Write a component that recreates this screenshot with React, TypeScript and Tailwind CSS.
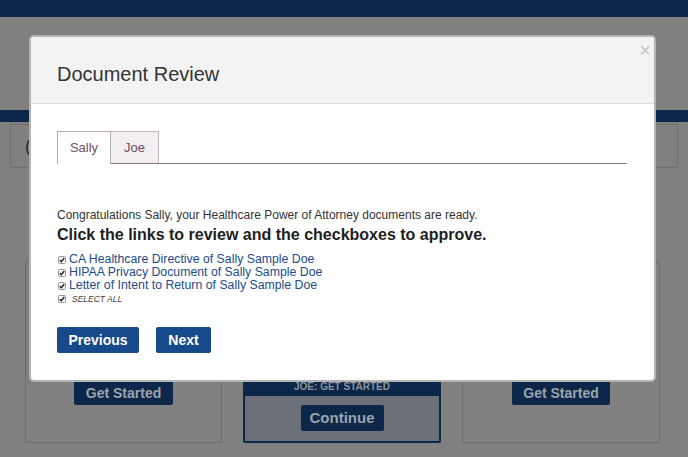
import React from "react";

function Check() {
  return (
    <svg width="8" height="8" viewBox="0 0 8 8" className="shrink-0">
      <rect x="0.5" y="0.5" width="7" height="7" rx="1" fill="#f4f4f4" stroke="#9a9a9a" />
      <path d="M1.8 4.2 L3.3 5.7 L6.3 2" fill="none" stroke="#222" strokeWidth="1.4" />
    </svg>
  );
}

export default function App() {
  const links = [
    "CA Healthcare Directive of Sally Sample Doe",
    "HIPAA Privacy Document of Sally Sample Doe",
    "Letter of Intent to Return of Sally Sample Doe",
  ];
  return (
    <div
      className="relative w-[688px] h-[457px] overflow-hidden bg-[#808080]"
      style={{ fontFamily: '"Liberation Sans", Arial, sans-serif' }}
    >
      {/* dimmed page behind the dialog */}
      <div className="h-[17px] bg-[#0c2749]" />
      <div className="relative h-[93px]">
        <svg width="90" height="90" viewBox="0 0 90 90" className="absolute left-[94px] top-[4px]">
          <circle cx="45" cy="50" r="32" fill="none" stroke="#7d4f36" strokeWidth="2" />
        </svg>
      </div>
      <div className="h-[12px] bg-[#0c2749]" />
      <div className="px-[10px] pt-[2px]">
        <div className="h-[44px] border border-[#6f6f6f] flex items-center pl-[14px]">
          <span className="text-[#2a2a2a] text-[18px]">(</span>
        </div>
      </div>
      <div className="flex gap-[21px] pl-[25px] mt-[94px]">
        <div className="w-[197px] h-[181px] border border-[#6e6e6e] flex flex-col items-center justify-end pb-[37px]">
          <div className="w-[99px] h-[24px] bg-[#0c2749] rounded-[2px] flex items-center justify-center text-[#9da3ab] font-bold text-[14px]">
            Get Started
          </div>
        </div>
        <div className="w-[198px] h-[181px] flex flex-col justify-end">
          <div className="border-2 border-[#0c2749] rounded-[2px] flex flex-col">
            <div className="h-[20px] bg-[#0c2749] flex items-center justify-center text-[10px] font-bold text-[#8d939c]">
              JOE: GET STARTED
            </div>
            <div className="h-[45px] bg-[#6c7179] flex items-start justify-center pt-[9px]">
              <div className="w-[83px] h-[26px] bg-[#0c2749] rounded-[2px] flex items-center justify-center text-[#9da3ab] font-bold text-[15px]">
                Continue
              </div>
            </div>
          </div>
        </div>
        <div className="w-[198px] h-[181px] border border-[#6e6e6e] flex flex-col items-center justify-end pb-[37px]">
          <div className="w-[98px] h-[24px] bg-[#0c2749] rounded-[2px] flex items-center justify-center text-[#9da3ab] font-bold text-[14px]">
            Get Started
          </div>
        </div>
      </div>

      {/* dialog */}
      <div className="absolute left-[29px] top-[35px] w-[627px] h-[347px] bg-white border-2 border-[#b4b4b4] rounded-[5px] overflow-hidden flex flex-col">
        <div className="relative h-[67px] bg-[#f3f3f3] border-b border-[#dcdcdc] flex items-center pl-[26px] pt-[8px]">
          <span className="text-[20px] text-[#333]">Document Review</span>
          <span className="absolute right-[3px] top-[3px] text-[20px] leading-[20px] text-[#c4c4c4]">×</span>
        </div>
        <div className="pl-[26px] pr-[27px] pt-[27px]">
          <div className="flex items-end border-b border-[#8d7688] h-[33px]">
            <div className="w-[54px] h-[33px] bg-white border border-b-0 border-[#b9a9b4] flex items-center justify-center text-[13px] text-[#6f4f66] -mb-px">
              Sally
            </div>
            <div className="w-[48px] h-[32px] bg-[#f3eef1] border border-l-0 border-b-0 border-[#c6b8c1] flex items-center justify-center text-[13px] text-[#6f4f66]">
              Joe
            </div>
          </div>
          <p className="mt-[44px] text-[12px] leading-[14px] text-[#333]">
            Congratulations Sally, your Healthcare Power of Attorney documents are ready.
          </p>
          <p className="mt-[3px] text-[16px] leading-[20px] font-bold text-[#1e1e1e]">
            Click the links to review and the checkboxes to approve.
          </p>
          <div className="mt-[8px] flex flex-col">
            {links.map((l) => (
              <div key={l} className="flex items-center gap-[3px] pl-[1px] h-[13px]">
                <Check />
                <span className="text-[12.3px] leading-[13px] text-[#1d4c8c]">{l}</span>
              </div>
            ))}
            <div className="flex items-center gap-[6px] pl-[1px] h-[14px]">
              <Check />
              <span className="text-[8.5px] italic text-[#444]">SELECT ALL</span>
            </div>
          </div>
          <div className="mt-[21px] flex gap-[17px]">
            <div className="w-[82px] h-[26px] bg-[#174a8b] rounded-[2px] flex items-center justify-center text-white font-bold text-[14px]">
              Previous
            </div>
            <div className="w-[55px] h-[26px] bg-[#174a8b] rounded-[2px] flex items-center justify-center text-white font-bold text-[14px]">
              Next
            </div>
          </div>
        </div>
      </div>
    </div>
  );
}
